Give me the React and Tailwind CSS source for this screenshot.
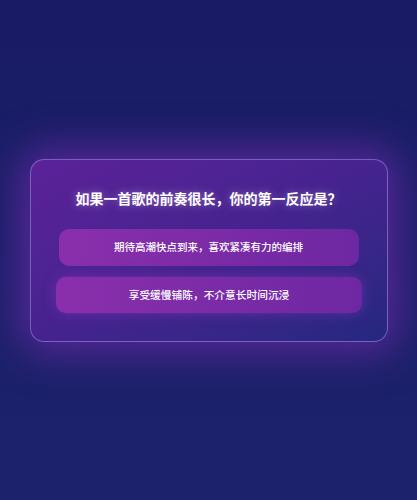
const question = {
  title: '如果一首歌的前奏很长，你的第一反应是？',
  options: [
    { id: 'a', label: '期待高潮快点到来，喜欢紧凑有力的编排' },
    { id: 'b', label: '享受缓慢铺陈，不介意长时间沉浸', hovered: true },
  ],
};

export default function App() {
  return (
    <div
      className="w-full h-[500px] flex items-center justify-center bg-gradient-to-b from-[#191c65] to-[#1c226c]"
      style={{ fontFamily: '"Noto Sans CJK SC", "Noto Sans", sans-serif' }}
    >
      <div className="w-[358px] rounded-[14px] border border-[#9078d8]/70 bg-gradient-to-br from-[#5c2299] via-[#45238f] to-[#24287f] px-[28px] pt-[28px] pb-[28px] shadow-[0_0_40px_10px_rgba(150,50,200,0.5)]">
        <h2 className="text-center text-[14px] leading-[20px] font-bold text-white [text-shadow:0_0_8px_rgba(255,255,255,0.35)]">
          {question.title}
        </h2>
        <div className="mt-[21px] flex flex-col gap-[11px]">
          {question.options.map(opt => (
            <button
              key={opt.id}
              className={`w-full rounded-[10px] text-center text-[10.5px] font-medium text-white bg-gradient-to-r from-[#8a2fac] to-[#6e27a2] ${
                opt.hovered ? 'h-[36px] scale-[1.02] shadow-[0_0_14px_rgba(170,60,210,0.35)]' : 'h-[37px]'
              }`}
            >
              {opt.label}
            </button>
          ))}
        </div>
      </div>
    </div>
  );
}
